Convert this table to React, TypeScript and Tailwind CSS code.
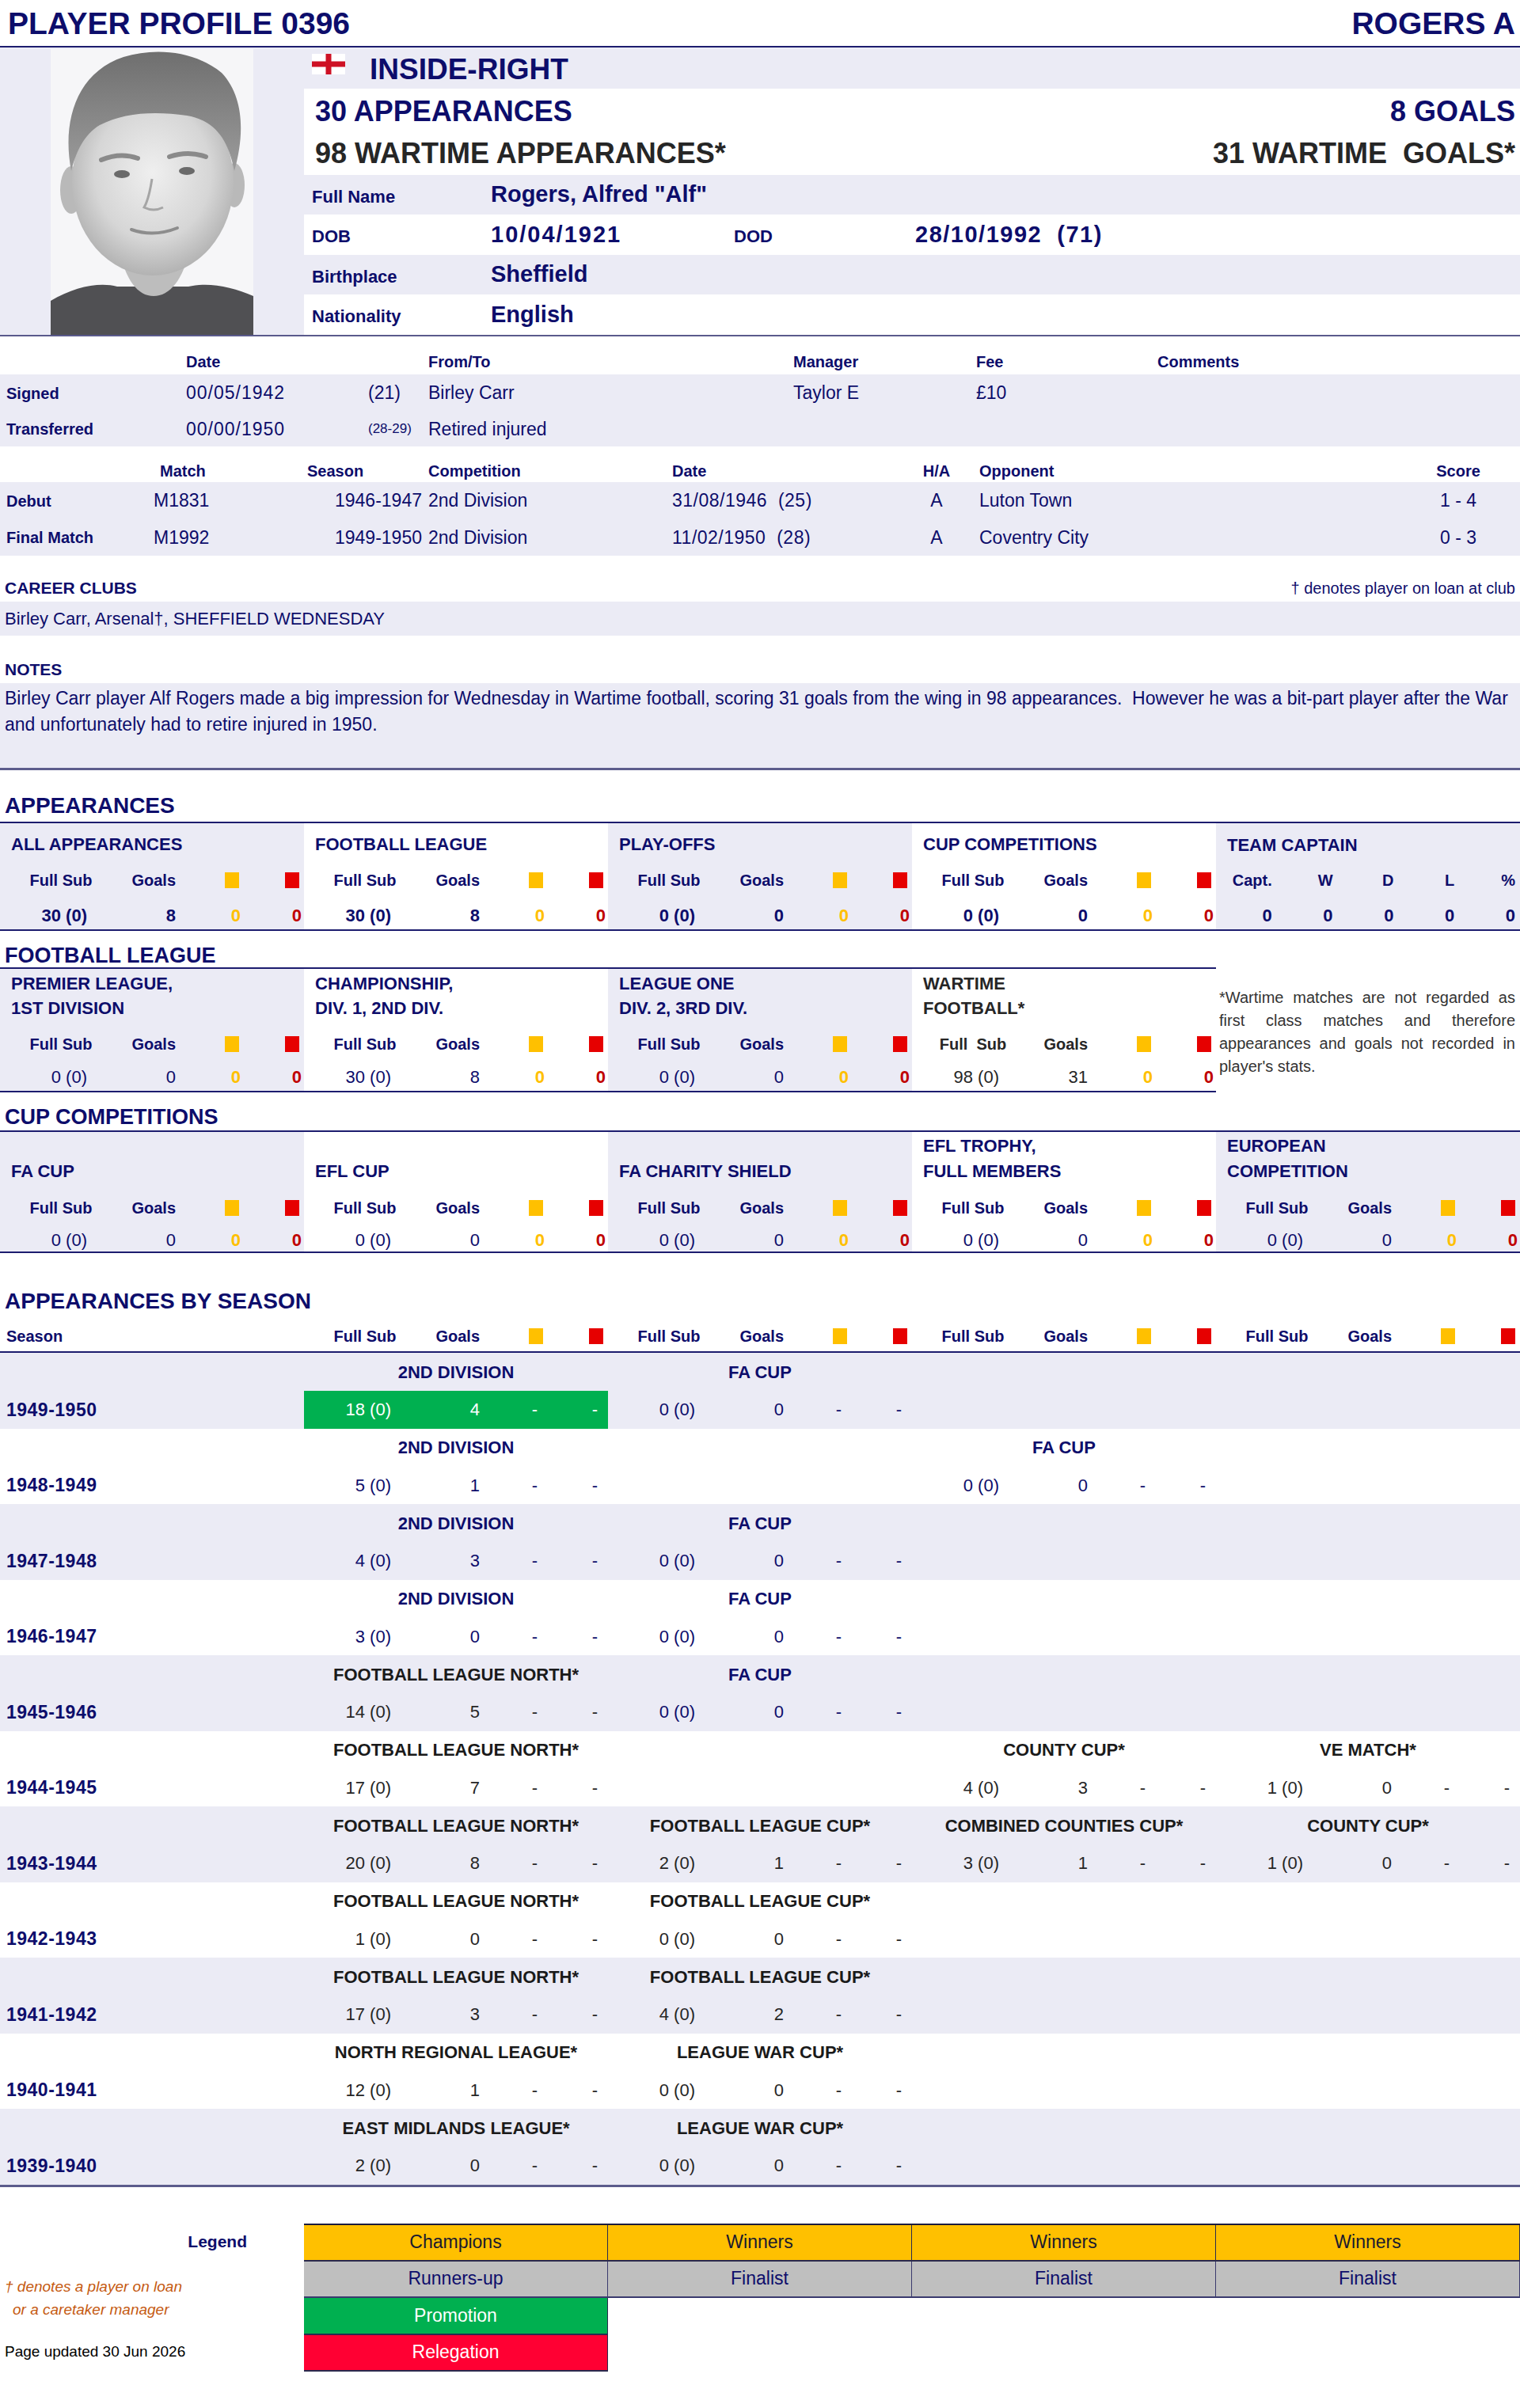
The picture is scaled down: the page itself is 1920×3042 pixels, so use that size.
import React from 'react';

const LAV = 'bg-[#ebebf5]';
const G4 = 'grid grid-cols-[154px_77px_77px_76px]';

type Vals = { fs: string; g: string; y?: string; r?: string };

function Flag() {
  return (
    <svg width="42" height="26" viewBox="0 0 42 26" className="shrink-0 self-start mt-[8px]">
      <rect width="42" height="26" fill="#ffffff" />
      <rect x="17.5" width="7" height="26" fill="#ce1124" />
      <rect y="9.5" width="42" height="7" fill="#ce1124" />
    </svg>
  );
}

function Photo() {
  return (
    <svg width="256" height="361" viewBox="0 0 256 361">
      <defs>
        <radialGradient id="face" cx="0.5" cy="0.45" r="0.6">
          <stop offset="0" stopColor="#efefef" />
          <stop offset="0.6" stopColor="#d6d6d6" />
          <stop offset="1" stopColor="#a9a9a9" />
        </radialGradient>
        <linearGradient id="hair" x1="0" y1="0" x2="0" y2="1">
          <stop offset="0" stopColor="#6f6f6f" />
          <stop offset="1" stopColor="#9b9b9b" />
        </linearGradient>
      </defs>
      <rect width="256" height="361" fill="#f6f6f8" />
      <path d="M0 318 C30 300 62 294 84 300 L174 300 C198 294 230 300 256 312 L256 361 L0 361 Z" fill="#505053" />
      <path d="M86 250 C94 292 110 312 130 312 C150 312 168 292 176 250 Z" fill="#bdbdbd" />
      <ellipse cx="26" cy="178" rx="14" ry="30" fill="#b9b9b9" />
      <ellipse cx="232" cy="172" rx="13" ry="28" fill="#b9b9b9" />
      <ellipse cx="129" cy="168" rx="102" ry="118" fill="url(#face)" />
      <path d="M26 154 C14 92 32 30 92 10 C132 -2 182 2 216 30 C246 62 244 112 232 154 C224 112 206 90 172 84 C132 78 92 80 62 96 C42 108 32 130 26 154 Z" fill="url(#hair)" />
      <path d="M64 140 Q88 130 110 138" stroke="#8a8a8a" strokeWidth="6" fill="none" strokeLinecap="round" />
      <path d="M150 136 Q174 128 196 136" stroke="#8a8a8a" strokeWidth="6" fill="none" strokeLinecap="round" />
      <ellipse cx="90" cy="158" rx="10" ry="5" fill="#6a6a6a" />
      <ellipse cx="172" cy="154" rx="10" ry="5" fill="#6a6a6a" />
      <path d="M128 164 Q124 190 118 200 Q130 206 142 200" stroke="#a5a5a5" strokeWidth="3" fill="none" />
      <path d="M102 228 Q130 238 160 226" stroke="#8d8d8d" strokeWidth="4" fill="none" strokeLinecap="round" />
    </svg>
  );
}

function StatHead({ dark, wide }: { dark?: boolean; wide?: boolean }) {
  return (
    <div className={`${G4} items-center text-[20px] font-bold ${dark ? 'text-[#262626]' : ''}`}>
      <div className="text-center">{wide ? 'Full\u00a0 Sub' : 'Full Sub'}</div>
      <div className="text-right pr-[9px]">Goals</div>
      <div className="flex justify-end pr-[6px]">
        <span className="block w-[18px] h-[20px] bg-[#ffc000]" />
      </div>
      <div className="flex justify-end pr-[6px]">
        <span className="block w-[18px] h-[20px] bg-[#e60000]" />
      </div>
    </div>
  );
}

function StatVals({ v, bold, dark, dash, white }: { v: Vals; bold?: boolean; dark?: boolean; dash?: boolean; white?: boolean }) {
  const tone = white ? 'text-white' : dark ? 'text-[#262626]' : '';
  return (
    <div className={`${G4} w-full items-center text-[22px] ${bold ? 'font-bold' : ''} ${tone}`}>
      <div className="text-right pr-[44px]">{v.fs}</div>
      <div className="text-right pr-[9px]">{v.g}</div>
      {dash ? (
        <>
          <div className="text-right pr-[13px]">-</div>
          <div className="text-right pr-[13px]">-</div>
        </>
      ) : (
        <>
          <div className="text-right pr-[4px] font-bold text-[#ffc000]">{v.y}</div>
          <div className="text-right pr-[3px] font-bold text-[#c00000]">{v.r}</div>
        </>
      )}
    </div>
  );
}

type BlockProps = {
  title: string[];
  v: Vals;
  kind: 'app' | 'fl' | 'cup';
  lav?: boolean;
  bold?: boolean;
  dark?: boolean;
};

function Block({ title, v, kind, lav, bold, dark }: BlockProps) {
  const titleBox =
    kind === 'app'
      ? 'h-[54px] flex flex-col justify-center leading-[30px]'
      : kind === 'fl'
      ? 'h-[72px] flex flex-col justify-start pt-[3px] leading-[31px]'
      : 'h-[70px] flex flex-col justify-end pb-[4px] leading-[32px]';
  const headBox = kind === 'app' ? 'h-[36px]' : kind === 'fl' ? 'h-[46px]' : 'h-[52px]';
  const valBox = kind === 'app' ? 'h-[44px] pt-[8px]' : kind === 'fl' ? 'h-[36px]' : 'h-[29px]';
  return (
    <div className={`w-[384px] ${lav ? LAV : 'bg-white'}`}>
      <div className={`${titleBox} pl-[14px] text-[22px] font-bold ${dark ? 'text-[#262626]' : ''}`}>
        {title.map((t) => (
          <div key={t}>{t}</div>
        ))}
      </div>
      <div className={`${headBox} flex items-center`}>
        <StatHead dark={dark} wide={dark} />
      </div>
      <div className={`${valBox} flex items-center`}>
        <StatVals v={v} bold={bold} dark={dark} />
      </div>
    </div>
  );
}

function CaptainBlock() {
  const heads = ['Capt.', 'W', 'D', 'L', '%'];
  return (
    <div className={`w-[384px] ${LAV}`}>
      <div className="h-[54px] flex items-center pl-[14px] text-[22px] font-bold">TEAM CAPTAIN</div>
      <div className="h-[36px] grid grid-cols-5 items-center text-[20px] font-bold">
        {heads.map((h) => (
          <div key={h} className="text-right pr-[6px]">{h}</div>
        ))}
      </div>
      <div className="h-[44px] pt-[8px] grid grid-cols-5 items-center text-[22px] font-bold">
        {heads.map((h) => (
          <div key={h} className="text-right pr-[6px]">0</div>
        ))}
      </div>
    </div>
  );
}

type SeasonCell = { t: string; fs: string; g: string; war?: boolean; promo?: boolean } | null;

const SEASONS: { s: string; c: SeasonCell[] }[] = [
  { s: '1949-1950', c: [{ t: '2ND DIVISION', fs: '18 (0)', g: '4', promo: true }, { t: 'FA CUP', fs: '0 (0)', g: '0' }, null, null] },
  { s: '1948-1949', c: [{ t: '2ND DIVISION', fs: '5 (0)', g: '1' }, null, { t: 'FA CUP', fs: '0 (0)', g: '0' }, null] },
  { s: '1947-1948', c: [{ t: '2ND DIVISION', fs: '4 (0)', g: '3' }, { t: 'FA CUP', fs: '0 (0)', g: '0' }, null, null] },
  { s: '1946-1947', c: [{ t: '2ND DIVISION', fs: '3 (0)', g: '0' }, { t: 'FA CUP', fs: '0 (0)', g: '0' }, null, null] },
  { s: '1945-1946', c: [{ t: 'FOOTBALL LEAGUE NORTH*', fs: '14 (0)', g: '5', war: true }, { t: 'FA CUP', fs: '0 (0)', g: '0' }, null, null] },
  {
    s: '1944-1945',
    c: [
      { t: 'FOOTBALL LEAGUE NORTH*', fs: '17 (0)', g: '7', war: true },
      null,
      { t: 'COUNTY CUP*', fs: '4 (0)', g: '3', war: true },
      { t: 'VE MATCH*', fs: '1 (0)', g: '0', war: true },
    ],
  },
  {
    s: '1943-1944',
    c: [
      { t: 'FOOTBALL LEAGUE NORTH*', fs: '20 (0)', g: '8', war: true },
      { t: 'FOOTBALL LEAGUE CUP*', fs: '2 (0)', g: '1', war: true },
      { t: 'COMBINED COUNTIES CUP*', fs: '3 (0)', g: '1', war: true },
      { t: 'COUNTY CUP*', fs: '1 (0)', g: '0', war: true },
    ],
  },
  { s: '1942-1943', c: [{ t: 'FOOTBALL LEAGUE NORTH*', fs: '1 (0)', g: '0', war: true }, { t: 'FOOTBALL LEAGUE CUP*', fs: '0 (0)', g: '0', war: true }, null, null] },
  { s: '1941-1942', c: [{ t: 'FOOTBALL LEAGUE NORTH*', fs: '17 (0)', g: '3', war: true }, { t: 'FOOTBALL LEAGUE CUP*', fs: '4 (0)', g: '2', war: true }, null, null] },
  { s: '1940-1941', c: [{ t: 'NORTH REGIONAL LEAGUE*', fs: '12 (0)', g: '1', war: true }, { t: 'LEAGUE WAR CUP*', fs: '0 (0)', g: '0', war: true }, null, null] },
  { s: '1939-1940', c: [{ t: 'EAST MIDLANDS LEAGUE*', fs: '2 (0)', g: '0', war: true }, { t: 'LEAGUE WAR CUP*', fs: '0 (0)', g: '0', war: true }, null, null] },
];

function SeasonRow({ s, c, i }: { s: string; c: SeasonCell[]; i: number }) {
  return (
    <div className={`flex h-[95.5px] ${i % 2 === 0 ? LAV : 'bg-white'}`}>
      <div className="w-[384px] flex flex-col">
        <div className="h-[48px]" />
        <div className="flex-1 flex items-center pl-[8px] text-[23px] font-bold tracking-[0.5px]">{s}</div>
      </div>
      {c.map((cell, j) => (
        <div key={j} className="w-[384px] flex flex-col">
          <div className={`h-[48px] flex items-center justify-center text-[22px] font-bold ${cell?.war ? 'text-[#1a1a1a]' : ''}`}>
            {cell?.t}
          </div>
          <div className={`flex-1 flex items-center ${cell?.promo ? 'bg-[#00b050]' : ''}`}>
            {cell && <StatVals v={{ fs: cell.fs, g: cell.g }} dash dark={cell.war} white={cell.promo} />}
          </div>
        </div>
      ))}
    </div>
  );
}

const TR = 'grid grid-cols-[235px_230px_76px_461px_231px_229px_1fr] items-center';
const MT = 'grid grid-cols-[194px_194px_153px_308px_294px_94px_527px_1fr] items-center';

export default function App() {
  return (
    <div className="w-[1920px] min-h-[3042px] bg-white font-['Liberation_Sans',Arial,sans-serif] text-[#0d0d6b]">
      {/* title */}
      <div className="h-[60px] flex items-center justify-between pl-[10px] pr-[6px] border-b-2 border-[#1c1c6e]">
        <h1 className="text-[39px] font-bold leading-none">PLAYER PROFILE 0396</h1>
        <h1 className="text-[39px] font-bold leading-none">ROGERS A</h1>
      </div>

      {/* header block */}
      <div className="flex border-b-2 border-[#5a5a8c]">
        <div className={`w-[384px] ${LAV} pl-[64px] pt-[2px]`}>
          <Photo />
        </div>
        <div className="flex-1 flex flex-col">
          <div className={`h-[52px] ${LAV} flex items-center pl-[10px] gap-[31px]`}>
            <Flag />
            <span className="text-[37px] font-bold leading-none pt-[2px]">INSIDE-RIGHT</span>
          </div>
          <div className="h-[109px] flex flex-col">
            <div className="h-[55px] flex items-center justify-between pl-[14px] pr-[6px] text-[36px] font-bold leading-none pt-[2px]">
              <span>30 APPEARANCES</span>
              <span>8 GOALS</span>
            </div>
            <div className="h-[54px] flex items-center justify-between pl-[14px] pr-[6px] text-[36px] font-bold leading-none text-[#262626]">
              <span>98 WARTIME APPEARANCES*</span>
              <span>31 WARTIME&nbsp; GOALS*</span>
            </div>
          </div>
          <div className={`h-[50px] ${LAV} flex items-center`}>
            <div className="w-[236px] pl-[10px] text-[22px] font-bold pt-[4px]">Full Name</div>
            <div className="text-[29px] font-bold">Rogers, Alfred &quot;Alf&quot;</div>
          </div>
          <div className="h-[51px] bg-white flex items-center">
            <div className="w-[236px] pl-[10px] text-[22px] font-bold pt-[4px]">DOB</div>
            <div className="w-[307px] text-[29px] font-bold tracking-[2px]">10/04/1921</div>
            <div className="w-[229px] text-[22px] font-bold pt-[4px]">DOD</div>
            <div className="text-[29px] font-bold tracking-[1.5px]">28/10/1992&nbsp; (71)</div>
          </div>
          <div className={`h-[50px] ${LAV} flex items-center`}>
            <div className="w-[236px] pl-[10px] text-[22px] font-bold pt-[4px]">Birthplace</div>
            <div className="text-[29px] font-bold">Sheffield</div>
          </div>
          <div className="h-[51px] bg-white flex items-center">
            <div className="w-[236px] pl-[10px] text-[22px] font-bold pt-[4px]">Nationality</div>
            <div className="text-[29px] font-bold">English</div>
          </div>
        </div>
      </div>

      {/* transfers */}
      <div className={`${TR} mt-[15px] h-[33px] text-[20px] font-bold`}>
        <div />
        <div>Date</div>
        <div />
        <div>From/To</div>
        <div>Manager</div>
        <div>Fee</div>
        <div>Comments</div>
      </div>
      <div className={LAV}>
        <div className={`${TR} h-[47px] text-[23px]`}>
          <div className="pl-[8px] text-[20px] font-bold">Signed</div>
          <div className="tracking-[1px]">00/05/1942</div>
          <div>(21)</div>
          <div>Birley Carr</div>
          <div>Taylor E</div>
          <div>£10</div>
          <div />
        </div>
        <div className={`${TR} h-[44px] text-[23px]`}>
          <div className="pl-[8px] text-[20px] font-bold">Transferred</div>
          <div className="tracking-[1px]">00/00/1950</div>
          <div className="text-[17px]">(28-29)</div>
          <div>Retired injured</div>
          <div />
          <div />
          <div />
        </div>
      </div>

      {/* debut / final */}
      <div className={`${MT} mt-[16px] h-[29px] text-[20px] font-bold`}>
        <div />
        <div className="pl-[8px]">Match</div>
        <div>Season</div>
        <div>Competition</div>
        <div>Date</div>
        <div className="text-center pr-[14px]">H/A</div>
        <div>Opponent</div>
        <div className="text-center">Score</div>
      </div>
      <div className={LAV}>
        <div className={`${MT} h-[47px] text-[23px]`}>
          <div className="pl-[8px] text-[20px] font-bold">Debut</div>
          <div>M1831</div>
          <div className="text-right pr-[8px]">1946-1947</div>
          <div>2nd Division</div>
          <div className="tracking-[0.5px]">31/08/1946&nbsp; (25)</div>
          <div className="text-center pr-[14px]">A</div>
          <div>Luton Town</div>
          <div className="text-center">1 - 4</div>
        </div>
        <div className={`${MT} h-[46px] text-[23px]`}>
          <div className="pl-[8px] text-[20px] font-bold">Final Match</div>
          <div>M1992</div>
          <div className="text-right pr-[8px]">1949-1950</div>
          <div>2nd Division</div>
          <div className="tracking-[0.5px]">11/02/1950&nbsp; (28)</div>
          <div className="text-center pr-[14px]">A</div>
          <div>Coventry City</div>
          <div className="text-center">0 - 3</div>
        </div>
      </div>

      {/* career clubs */}
      <div className="mt-[24px] h-[34px] flex items-center justify-between pl-[6px] pr-[6px]">
        <span className="text-[21px] font-bold">CAREER CLUBS</span>
        <span className="text-[20px]">† denotes player on loan at club</span>
      </div>
      <div className={`${LAV} h-[43px] flex items-center pl-[6px] text-[22px]`}>
        Birley Carr, Arsenal†, SHEFFIELD WEDNESDAY
      </div>

      {/* notes */}
      <div className="mt-[26px] h-[34px] flex items-center pl-[6px] text-[21px] font-bold">NOTES</div>
      <div className={`${LAV} h-[110px] pt-[3px] px-[6px] text-[23px] leading-[33px] border-b-[3px] border-[#5c5c8c] whitespace-nowrap`}>
        Birley Carr player Alf Rogers made a big impression for Wednesday in Wartime football, scoring 31 goals from the wing in 98 appearances.&nbsp; However he was a bit-part player after the War
        <br />
        and unfortunately had to retire injured in 1950.
      </div>

      {/* appearances */}
      <div className="h-[65px] pt-[24px] flex items-center pl-[6px] text-[28px] font-bold">APPEARANCES</div>
      <div className="flex border-t-2 border-b-2 border-[#1c1c6e]">
        <Block kind="app" lav bold title={['ALL APPEARANCES']} v={{ fs: '30 (0)', g: '8', y: '0', r: '0' }} />
        <Block kind="app" bold title={['FOOTBALL LEAGUE']} v={{ fs: '30 (0)', g: '8', y: '0', r: '0' }} />
        <Block kind="app" lav bold title={['PLAY-OFFS']} v={{ fs: '0 (0)', g: '0', y: '0', r: '0' }} />
        <Block kind="app" bold title={['CUP COMPETITIONS']} v={{ fs: '0 (0)', g: '0', y: '0', r: '0' }} />
        <CaptainBlock />
      </div>

      {/* football league */}
      <div className="h-[46px] pt-[16px] flex items-center pl-[6px] text-[27px] font-bold">FOOTBALL LEAGUE</div>
      <div className="flex">
        <div className="w-[1536px] flex border-t-2 border-b-2 border-[#1c1c6e]">
          <Block kind="fl" lav title={['PREMIER LEAGUE,', '1ST DIVISION']} v={{ fs: '0 (0)', g: '0', y: '0', r: '0' }} />
          <Block kind="fl" title={['CHAMPIONSHIP,', 'DIV. 1, 2ND DIV.']} v={{ fs: '30 (0)', g: '8', y: '0', r: '0' }} />
          <Block kind="fl" lav title={['LEAGUE ONE', 'DIV. 2, 3RD DIV.']} v={{ fs: '0 (0)', g: '0', y: '0', r: '0' }} />
          <Block kind="fl" dark title={['WARTIME', 'FOOTBALL*']} v={{ fs: '98 (0)', g: '31', y: '0', r: '0' }} />
        </div>
        <div className="w-[384px] pt-[24px] pl-[4px] pr-[6px] text-[20px] leading-[29px] text-justify text-[#333333]">
          *Wartime matches are not regarded as first class matches and therefore appearances and goals not recorded in player&apos;s stats.
        </div>
      </div>

      {/* cup competitions */}
      <div className="h-[48px] pt-[14px] flex items-center pl-[6px] text-[27px] font-bold">CUP COMPETITIONS</div>
      <div className="flex border-t-2 border-b-2 border-[#1c1c6e]">
        <Block kind="cup" lav title={['FA CUP']} v={{ fs: '0 (0)', g: '0', y: '0', r: '0' }} />
        <Block kind="cup" title={['EFL CUP']} v={{ fs: '0 (0)', g: '0', y: '0', r: '0' }} />
        <Block kind="cup" lav title={['FA CHARITY SHIELD']} v={{ fs: '0 (0)', g: '0', y: '0', r: '0' }} />
        <Block kind="cup" title={['EFL TROPHY,', 'FULL MEMBERS']} v={{ fs: '0 (0)', g: '0', y: '0', r: '0' }} />
        <Block kind="cup" lav title={['EUROPEAN', 'COMPETITION']} v={{ fs: '0 (0)', g: '0', y: '0', r: '0' }} />
      </div>

      {/* by season */}
      <div className="h-[82px] pt-[40px] flex items-center pl-[6px] text-[28px] font-bold">APPEARANCES BY SEASON</div>
      <div className="flex h-[44px] items-end pb-[4px] border-b-2 border-[#1c1c6e]">
        <div className="w-[384px] pl-[8px] text-[20px] font-bold">Season</div>
        {[0, 1, 2, 3].map((k) => (
          <div key={k} className="w-[384px]">
            <StatHead />
          </div>
        ))}
      </div>
      <div className="border-b-[3px] border-[#5c5c8c]">
        {SEASONS.map((r, i) => (
          <SeasonRow key={r.s} s={r.s} c={r.c} i={i} />
        ))}
      </div>

      {/* legend */}
      <div className="flex mt-[46px]">
        <div className="w-[384px] flex flex-col">
          <div className="h-[47px] flex items-center justify-end pr-[72px] text-[21px] font-bold">Legend</div>
          <div className="h-[93px] pt-[18px] pl-[6px] text-[19px] italic leading-[29px] text-[#c55a11]">
            <div>† denotes a player on loan</div>
            <div className="pl-[10px]">or a caretaker manager</div>
          </div>
          <div className="h-[46px] flex items-center pl-[6px] text-[19px] text-black">Page updated 30 Jun 2026</div>
        </div>
        <div className="w-[1536px] text-[23px]">
          <div className="grid grid-cols-4 border-t-2 border-[#1c1c3e] bg-[#ffc000] text-[#1a1a2e]">
            {['Champions', 'Winners', 'Winners', 'Winners'].map((t, k) => (
              <div key={k} className="h-[46px] flex items-center justify-center border-r border-b-2 border-[#2a2a4e]">{t}</div>
            ))}
          </div>
          <div className="grid grid-cols-4 bg-[#bfbfbf]">
            {['Runners-up', 'Finalist', 'Finalist', 'Finalist'].map((t, k) => (
              <div key={k} className="h-[46px] flex items-center justify-center border-r border-b-2 border-[#3a3a6e]">{t}</div>
            ))}
          </div>
          <div className="w-[384px] h-[47px] flex items-center justify-center bg-[#00b050] text-white border-r border-b-2 border-[#2a2a4e]">Promotion</div>
          <div className="w-[384px] h-[46px] flex items-center justify-center bg-[#ff0033] text-white border-r border-b-2 border-[#2a2a4e]">Relegation</div>
        </div>
      </div>
    </div>
  );
}
